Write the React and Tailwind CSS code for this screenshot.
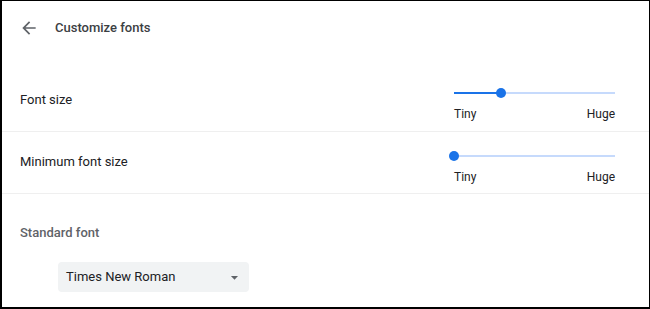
import React from "react";

function Slider({ value }) {
  return (
    <div className="w-[161px] mt-[18px] mr-[34px]">
      <div className="relative h-[12px]">
        <div className="absolute left-0 right-0 top-[5px] h-[2px] bg-[#c6dafc]" />
        <div
          className="absolute left-0 top-[5px] h-[2px] bg-[#1a73e8]"
          style={{ width: `${value * 100}%` }}
        />
        <div
          className="absolute top-[1px] w-[10px] h-[10px] -ml-[5px] rounded-full bg-[#1a73e8]"
          style={{ left: `${value * 100}%` }}
        />
      </div>
      <div className="mt-[7px] flex justify-between text-[12px] leading-[16px] text-[#202124]">
        <span>Tiny</span>
        <span>Huge</span>
      </div>
    </div>
  );
}

export default function App() {
  return (
    <div
      className="w-[650px] h-[309px] bg-white border-black border-l-2 border-t border-r border-b-2 flex flex-col overflow-hidden"
      style={{ fontFamily: "Roboto, 'Liberation Sans', sans-serif" }}
    >
      <div className="h-[54px] flex items-center pl-[17px] shrink-0">
        <svg width="20" height="20" viewBox="0 0 24 24" fill="#5f6368">
          <path d="M20 11H7.83l5.59-5.59L12 4l-8 8 8 8 1.41-1.41L7.83 13H20v-2z" />
        </svg>
        <span className="ml-[16px] text-[13px] font-medium text-[#3c4043]">
          Customize fonts
        </span>
      </div>

      <div className="mt-[14px] h-[63px] shrink-0 flex justify-between border-b border-[#efefef]">
        <div className="pl-[18px] flex items-center text-[13px] text-[#202124] pb-[1px]">
          Font size
        </div>
        <Slider value={0.29} />
      </div>

      <div className="h-[62px] shrink-0 flex justify-between border-b border-[#efefef]">
        <div className="pl-[18px] flex items-center text-[13px] text-[#202124] pb-[1px]">
          Minimum font size
        </div>
        <Slider value={0} />
      </div>

      <div className="pl-[18px] pt-[29px]">
        <div className="h-[20px] flex items-center text-[13px] font-medium text-[#5f6368]">
          Standard font
        </div>
        <div className="mt-[19px] ml-[38px] w-[191px] h-[30px] rounded-[4px] bg-[#f1f3f4] flex items-center justify-between pl-[8px] pr-[6px]">
          <span className="text-[13px] text-[#202124]">Times New Roman</span>
          <svg width="17" height="17" viewBox="0 0 24 24" fill="#5f6368">
            <path d="M7 10l5 5 5-5z" />
          </svg>
        </div>
      </div>
    </div>
  );
}
